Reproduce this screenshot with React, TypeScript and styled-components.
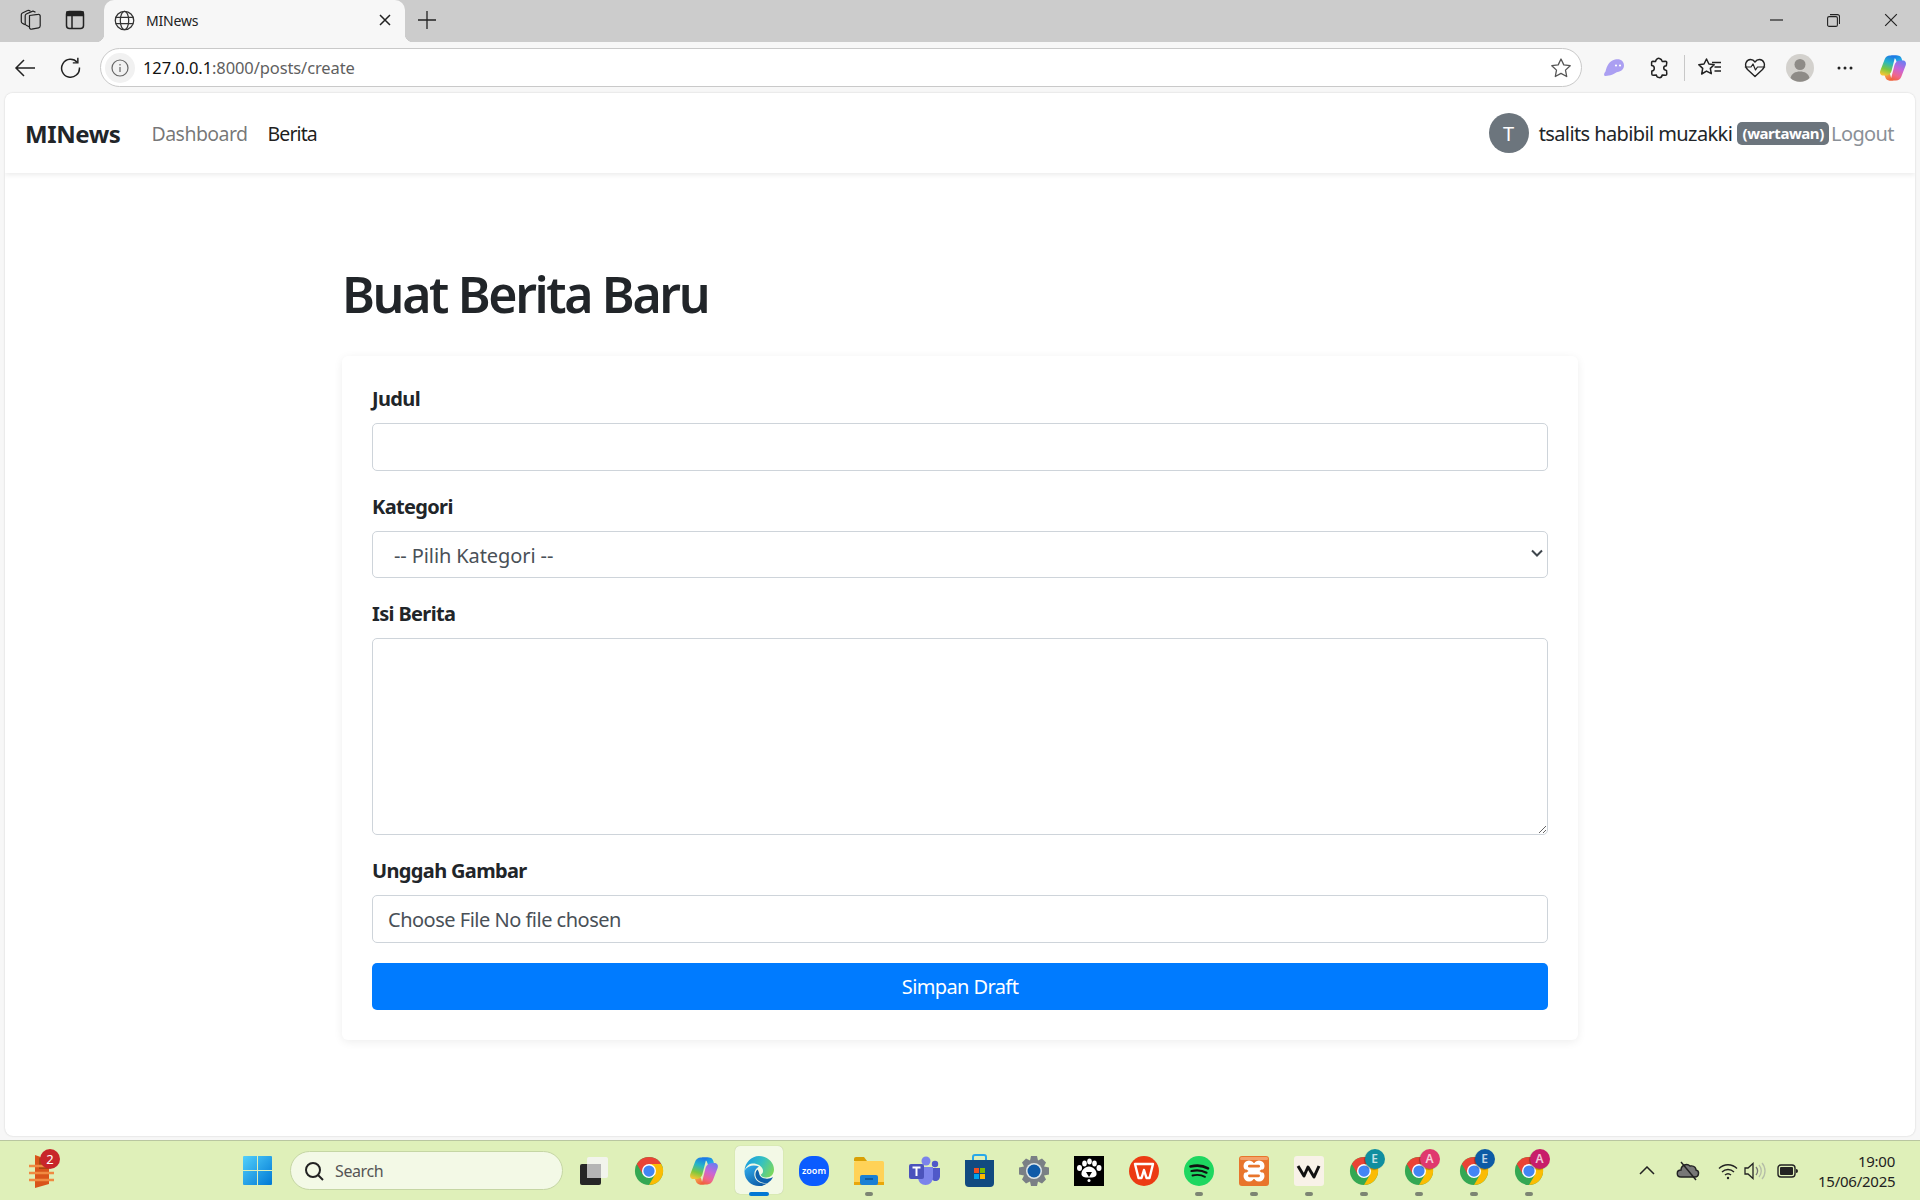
import React from "react";
import styled, { createGlobalStyle } from "styled-components";

const GlobalStyle = createGlobalStyle`
  html, body {
    margin: 0;
    padding: 0;
    height: 1200px;
    overflow: hidden;
    font-family: "Noto Sans", "Open Sans", sans-serif;
    color: #212529;
  }
  * { box-sizing: border-box; }
`;

const Screen = styled.div`
  width: 1920px;
  height: 1200px;
  display: flex;
  flex-direction: column;
  background: #f7f7f7;
`;

const TabStrip = styled.div`
  height: 42px;
  flex: none;
  display: flex;
  align-items: center;
  background: #cccccc;
  padding-left: 9px;
`;

const StripButton = styled.div`
  width: 44px;
  height: 42px;
  padding-bottom: 2px;
  display: flex;
  align-items: center;
  justify-content: center;
`;

const Tab = styled.div`
  position: relative;
  width: 301px;
  height: 42px;
  margin-left: 7px;
  display: flex;
  align-items: center;
  padding: 0 14px 2px 10px;
  background: #f7f7f7;
  border-radius: 10px 10px 0 0;
  &::before, &::after {
    content: "";
    position: absolute;
    bottom: 0;
    width: 8px;
    height: 8px;
  }
  &::before {
    left: -8px;
    background: radial-gradient(circle at 0 0, #cccccc 8px, #f7f7f7 8.5px);
  }
  &::after {
    right: -8px;
    background: radial-gradient(circle at 100% 0, #cccccc 8px, #f7f7f7 8.5px);
  }
`;

const TabTitle = styled.span`
  flex: 1;
  margin-left: 11px;
  font-size: 14px;
  letter-spacing: -0.2px;
  color: #222;
`;

const WindowControls = styled.div`
  margin-left: auto;
  display: flex;
`;

const WindowButton = styled.div`
  width: 57.5px;
  height: 42px;
  padding-bottom: 2px;
  display: flex;
  align-items: center;
  justify-content: center;
`;

const Toolbar = styled.div`
  height: 51px;
  flex: none;
  display: flex;
  align-items: center;
  padding: 0 4.5px 0 2.5px;
`;

const ToolButton = styled.div<{ $pushed?: boolean }>`
  width: 45px;
  height: 40px;
  margin-left: ${({ $pushed }) => ($pushed ? 3 : 0)}px;
  flex: none;
  display: flex;
  align-items: center;
  justify-content: center;
`;

const AddressBar = styled.div`
  flex: 1;
  height: 39px;
  margin: 0 9.5px 0 7.5px;
  padding: 0 9px 0 4px;
  display: flex;
  align-items: center;
  background: #fff;
  border: 1px solid #c9c9c9;
  border-radius: 20px;
`;

const InfoChip = styled.div`
  width: 30px;
  height: 30px;
  border-radius: 50%;
  background: #f1f1f1;
  display: flex;
  align-items: center;
  justify-content: center;
`;

const Url = styled.div`
  flex: 1;
  margin-left: 8px;
  font-size: 16.5px;
  letter-spacing: -0.1px;
  color: #5f5f5f;
  b {
    font-weight: 400;
    color: #111;
  }
`;

const ToolDivider = styled.div`
  width: 1px;
  height: 26px;
  margin: 0 2.5px;
  background: #c8c8c8;
  flex: none;
`;

const Panel = styled.div`
  flex: 1;
  margin: 0 5px 4px;
  background: #fff;
  border-radius: 8px;
  box-shadow: 0 0 2px rgba(0, 0, 0, 0.18);
  overflow: hidden;
`;

const Navbar = styled.nav`
  height: 80px;
  display: flex;
  align-items: center;
  padding: 0 21px 0 20px;
  background: #fff;
  box-shadow: 0 2px 5px rgba(0, 0, 0, 0.08);
`;

const Brand = styled.span`
  font-size: 24px;
  font-weight: 700;
  letter-spacing: -0.4px;
  color: #212529;
  margin-right: 31px;
`;

const NavLink = styled.span<{ $active?: boolean }>`
  font-size: 19.5px;
  letter-spacing: ${({ $active }) => ($active ? "-0.9px" : "-0.55px")};
  margin-right: 20px;
  color: ${({ $active }) => ($active ? "rgba(0,0,0,.9)" : "rgba(0,0,0,.55)")};
`;

const UserArea = styled.div`
  margin-left: auto;
  display: flex;
  align-items: center;
`;

const Avatar = styled.div`
  width: 40px;
  height: 40px;
  border-radius: 50%;
  background: #6c757d;
  color: #fff;
  font-size: 20px;
  display: flex;
  align-items: center;
  justify-content: center;
  margin-right: 10px;
`;

const UserName = styled.span`
  font-size: 20px;
  letter-spacing: -0.6px;
  margin-right: 5px;
`;

const RoleBadge = styled.span`
  background: #6c757d;
  color: #fff;
  font-size: 15px;
  font-weight: 700;
  letter-spacing: -0.45px;
  line-height: 23px;
  height: 23px;
  padding: 0 5.25px;
  border-radius: 5px;
`;

const Logout = styled.span`
  font-size: 20px;
  letter-spacing: -0.6px;
  color: #8a9097;
  margin-left: 2px;
`;

const Container = styled.main`
  width: 1236px;
  margin: 0 auto;
`;

const Title = styled.h1`
  margin: 0;
  padding-top: 87px;
  height: 183px;
  font-size: 50px;
  line-height: 68px;
  font-weight: 600;
  letter-spacing: -2.35px;
  color: #212529;
`;

const Card = styled.form`
  height: 684px;
  padding: 27px 30px 0;
  background: #fff;
  border-radius: 6px;
  box-shadow: 0 2px 10px rgba(0, 0, 0, 0.07);
`;

const Label = styled.label`
  display: block;
  height: 30px;
  margin-bottom: 10px;
  font-size: 20px;
  line-height: 32px;
  font-weight: 700;
  letter-spacing: -0.65px;
  color: #212529;
`;

const Field = styled.div<{ $gap: number }>`
  margin-bottom: ${({ $gap }) => $gap}px;
`;

const TextInput = styled.input`
  display: block;
  width: 100%;
  height: 48px;
  border: 1px solid #ced4da;
  border-radius: 5px;
  background: #fff;
  outline: none;
`;

const SelectWrap = styled.div`
  position: relative;
  svg {
    position: absolute;
    right: 5px;
    top: 18px;
    pointer-events: none;
  }
`;

const SelectInput = styled.select`
  display: block;
  width: 100%;
  height: 47px;
  padding: 2px 10px 0 21px;
  appearance: none;
  border: 1px solid #ced4da;
  border-radius: 5px;
  background: #fff;
  font-family: inherit;
  font-size: 20px;
  letter-spacing: -0.1px;
  color: #495057;
  outline: none;
`;

const TextArea = styled.textarea`
  display: block;
  width: 100%;
  height: 197px;
  border: 1px solid #ced4da;
  border-radius: 5px;
  resize: vertical;
  outline: none;
`;

const FileBox = styled.div`
  height: 48px;
  padding: 0 15px;
  display: flex;
  align-items: center;
  border: 1px solid #ced4da;
  border-radius: 5px;
  font-size: 20px;
  letter-spacing: -0.5px;
  color: #495057;
`;

const SubmitButton = styled.button`
  display: block;
  width: 100%;
  height: 47px;
  border: 0;
  border-radius: 5px;
  background: #007bff;
  color: #fff;
  font-family: inherit;
  font-size: 20px;
  letter-spacing: -0.6px;
`;

const Taskbar = styled.div`
  height: 60px;
  flex: none;
  display: flex;
  align-items: center;
  background: #dff0b9;
  border-top: 1px solid #b9c6a0;
`;

const WidgetSlot = styled.div`
  position: relative;
  width: 84px;
  height: 59px;
  flex: none;
  display: flex;
  align-items: center;
  justify-content: center;
`;

const WidgetBadge = styled.span`
  position: absolute;
  left: 40px;
  top: 8px;
  width: 20px;
  height: 20px;
  border-radius: 50%;
  background: #c8262a;
  color: #fff;
  font-size: 13px;
  line-height: 20px;
  text-align: center;
`;

const StartSlot = styled.div`
  width: 44px;
  margin-left: 151px;
  flex: none;
  display: flex;
  justify-content: center;
`;

const SearchBox = styled.div`
  width: 273px;
  height: 39px;
  margin-left: 11px;
  padding-left: 13px;
  flex: none;
  display: flex;
  align-items: center;
  gap: 11px;
  background: #f3f9e6;
  border: 1px solid #c5d6a4;
  border-radius: 20px;
  font-size: 16px;
  letter-spacing: -0.4px;
  color: #555;
`;

const TaskIcons = styled.div`
  margin-left: 3.5px;
  display: flex;
`;

const TaskSlot = styled.div<{ $active?: boolean }>`
  position: relative;
  width: 55px;
  height: 59px;
  display: flex;
  align-items: center;
  justify-content: center;
  &::before {
    content: "";
    display: ${({ $active }) => ($active ? "block" : "none")};
    position: absolute;
    left: 3.5px;
    top: 5px;
    width: 48px;
    height: 48px;
    border-radius: 5px;
    background: #f3f9e6;
    box-shadow: 0 0 1px rgba(0, 0, 0, 0.25);
  }
  svg { position: relative; }
`;

const RunDot = styled.span<{ $active?: boolean }>`
  position: absolute;
  bottom: 4px;
  left: 50%;
  transform: translateX(-50%);
  width: ${({ $active }) => ($active ? 20 : 8)}px;
  height: 4px;
  border-radius: 2px;
  background: ${({ $active }) => ($active ? "#0078d4" : "#7d8573")};
`;

const ProfileBadge = styled.span<{ $color: string }>`
  position: absolute;
  left: 28px;
  top: 8px;
  width: 20px;
  height: 20px;
  border-radius: 50%;
  background: ${({ $color }) => $color};
  box-shadow: -1px 1px 1px rgba(0, 0, 0, 0.3);
  color: rgba(255, 255, 255, 0.75);
  font-size: 12px;
  font-weight: 600;
  line-height: 20px;
  text-align: center;
`;

const Tray = styled.div`
  margin-left: auto;
  padding-right: 25px;
  display: flex;
  align-items: center;
`;

const TrayItem = styled.div<{ $w: number; $mr: number }>`
  width: ${({ $w }) => $w}px;
  margin-right: ${({ $mr }) => $mr}px;
  display: flex;
  justify-content: center;
`;

const Clock = styled.div`
  width: 77px;
  text-align: right;
  white-space: nowrap;
  font-size: 15px;
  line-height: 20px;
  letter-spacing: -0.25px;
  color: #222;
`;

const Workspaces = () => (
  <svg width="22" height="22" viewBox="0 0 22 22" fill="none" stroke="#222" strokeWidth="1.2" strokeLinejoin="round">
    <path d="M9.500 6.500 18 5.300a1.800 1.800 0 0 1 2.200 1.800v9.700a2 2 0 0 1-1.600 2l-7 1.400a1.800 1.800 0 0 1-2.100-1.800z" />
    <path d="M15.500 3.200 13.800 2.400a1.800 1.800 0 0 0-1.700 0L6.300 5a2 2 0 0 0-1.100 1.800v7.800a1.800 1.800 0 0 0 1 1.600l3 1.500" />
    <path d="M10.500 2.200 9.300 1.500a1.800 1.800 0 0 0-1.700 0L2.400 4A2 2 0 0 0 1.300 5.800v6.800a1.800 1.800 0 0 0 1 1.600l2.600 1.400" />
  </svg>
);

const VerticalTabs = () => (
  <svg width="20" height="20" viewBox="0 0 20 20" fill="none" stroke="#222" strokeWidth="1.500">
    <rect x="1.500" y="1.500" width="17" height="17" rx="3" />
    <path d="M2 2h16v3.500H2z" fill="#222" />
    <path d="M7 5v13" />
  </svg>
);

const Globe = () => (
  <svg width="21" height="21" viewBox="0 0 20 20" fill="none" stroke="#333" strokeWidth="1.2">
    <circle cx="10" cy="10" r="8.800" />
    <ellipse cx="10" cy="10" rx="4" ry="8.800" />
    <path d="M1.600 7h16.800M1.600 13h16.800" />
  </svg>
);

const CloseX = ({ size = 12, w = 1.5 }: { size?: number; w?: number }) => (
  <svg width={size} height={size} viewBox="0 0 12 12" stroke="#222" strokeWidth={w}>
    <path d="M1 1l10 10M11 1 1 11" />
  </svg>
);

const Plus = () => (
  <svg width="18" height="18" viewBox="0 0 18 18" stroke="#222" strokeWidth="1.300">
    <path d="M9 0v18M0 9h18" />
  </svg>
);

const Minimize = () => (
  <svg width="13" height="2" viewBox="0 0 13 2" stroke="#222" strokeWidth="1.200">
    <path d="M0 1h13" />
  </svg>
);

const Restore = () => (
  <svg width="13" height="13" viewBox="0 0 13 13" fill="none" stroke="#222" strokeWidth="1.100">
    <rect x="0.600" y="2.600" width="9.800" height="9.800" rx="1.500" />
    <path d="M3 .6h7.500a2 2 0 0 1 2 2V10" />
  </svg>
);

const BackArrow = () => (
  <svg width="22" height="20" viewBox="0 0 22 20" fill="none" stroke="#222" strokeWidth="1.500">
    <path d="M21 10H2M10 2l-8 8 8 8" />
  </svg>
);

const Reload = () => (
  <svg width="21" height="21" viewBox="0 0 20 20" fill="none" stroke="#222" strokeWidth="1.400">
    <path d="M16.500 5.200A8.500 8.500 0 1 0 18.500 10" />
    <path d="M17 .8v4.800h-4.800" />
  </svg>
);

const InfoIcon = () => (
  <svg width="18" height="18" viewBox="0 0 18 18" fill="none" stroke="#666" strokeWidth="1.200">
    <circle cx="9" cy="9" r="8" />
    <path d="M9 8v5M9 5v1.400" />
  </svg>
);

const StarIcon = () => (
  <svg width="22" height="22" viewBox="0 0 22 22" fill="none" stroke="#555" strokeWidth="1.300" strokeLinejoin="round">
    <path d="M11 2l2.800 5.900 6.400.8-4.700 4.400 1.200 6.400L11 16.400l-5.700 3.100 1.200-6.400-4.700-4.400 6.400-.8z" />
  </svg>
);

const GhostIcon = () => (
  <svg width="22" height="19" viewBox="0 0 22 19">
    <path d="M2.500 18C.5 18 .8 15.500 2.500 13.500 3.800 8 6 3 12 1.500 17.500.3 21 3 21 7.500 21 11 18 13.500 14.500 14 12.500 14.300 11.500 16 9 16.800 7 17.500 5 18 2.500 18z" fill="#ab9ff2" />
    <circle cx="13" cy="7.500" r="1.100" fill="#fff" />
    <circle cx="17" cy="7.500" r="1.100" fill="#fff" />
  </svg>
);

const PuzzleIcon = () => (
  <svg width="22" height="22" viewBox="0 0 22 22" fill="none" stroke="#222" strokeWidth="1.500" strokeLinejoin="round">
    <path d="M7.500 4.500C8 2 10 1 11.500 1.500c1.700.5 2.500 1.600 2.700 3l3.300-.3c.8 0 1.300.5 1.300 1.300l-.5 3.300c-1.800 0-2.600 1-2.600 2.300s.9 2.200 2.800 2.300l.3 3.600c0 .8-.5 1.300-1.300 1.300l-3.300-.3c-.3 1.500-1.500 2.800-3 2.600-1.500 0-2.600-1.200-2.800-2.600l-3.300.3c-.8 0-1.300-.5-1.300-1.300V14c1.500-.2 2.500-1.300 2.500-2.800S5.600 8.700 3.600 8.500V5.500c0-.8.5-1.300 1.300-1.300z" />
  </svg>
);

const FavoritesIcon = () => (
  <svg width="26" height="22" viewBox="0 0 26 22" fill="none" stroke="#222" strokeWidth="1.500" strokeLinejoin="round">
    <path d="M9.500 2l2.400 5 5.300.7-3.900 3.700 1 5.300-4.800-2.600-4.800 2.900 1-5.600L1.800 7.700 7 7z" />
    <path d="M15 5.500h9M17.500 10h6.500M17.500 14h6.500" />
  </svg>
);

const HeartIcon = () => (
  <svg width="22" height="20" viewBox="0 0 22 20" fill="none" stroke="#222" strokeWidth="1.400" strokeLinejoin="round">
    <path d="M11 18.500 3.500 11.500C-.5 7 2.500 1.500 6.500 1.500c2 0 3.500 1 4.500 2.500 1-1.500 2.500-2.500 4.500-2.500 4 0 7 5.500 3 10z" />
    <path d="M.8 9H7l2-3 2.500 6 2-3h7.700" strokeWidth="1.200" />
  </svg>
);

const ProfileIcon = () => (
  <svg width="28" height="28" viewBox="0 0 28 28">
    <circle cx="14" cy="14" r="14" fill="#d3d1cd" />
    <circle cx="14" cy="10.500" r="5.500" fill="#8e8b87" />
    <path d="M4.500 24c1-4.500 5-6.500 9.500-6.500s8.500 2 9.500 6.500a14 14 0 0 1-19 0z" fill="#8e8b87" />
  </svg>
);

const DotsIcon = () => (
  <svg width="16" height="4" viewBox="0 0 16 4" fill="#222">
    <circle cx="2" cy="2" r="1.500" />
    <circle cx="8" cy="2" r="1.500" />
    <circle cx="14" cy="2" r="1.500" />
  </svg>
);

const CopilotIcon = ({ id, size = 28 }: { id: string; size?: number }) => (
  <svg width={size} height={size} viewBox="0 0 28 28">
    <defs>
      <linearGradient id={`${id}a`} x1="0.6" y1="0" x2="0.3" y2="1">
        <stop offset="0" stopColor="#1d78e8" />
        <stop offset="0.35" stopColor="#25b5c8" />
        <stop offset="0.7" stopColor="#7cc83e" />
        <stop offset="1" stopColor="#f4c534" />
      </linearGradient>
      <linearGradient id={`${id}b`} x1="0.7" y1="0" x2="0.3" y2="1">
        <stop offset="0" stopColor="#6f7cf0" />
        <stop offset="0.4" stopColor="#c765d8" />
        <stop offset="0.75" stopColor="#f0668a" />
        <stop offset="1" stopColor="#f0613a" />
      </linearGradient>
      <linearGradient id={`${id}c`} x1="0" y1="0" x2="1" y2="1">
        <stop offset="0" stopColor="#0f6fe0" />
        <stop offset="1" stopColor="#2fc2e8" />
      </linearGradient>
      <linearGradient id={`${id}d`} x1="0" y1="0" x2="1" y2="1">
        <stop offset="0" stopColor="#f7b34a" />
        <stop offset="1" stopColor="#ee4f3a" />
      </linearGradient>
    </defs>
    <path d="M12 1.500h6.500c2 0 3.500 1 4.200 3.200L24 9h-6l-1-3c-.5-1.500-1.500-2.200-3-2.200z" fill={`url(#${id}c)`} />
    <path d="M5 20h6l1 3.500c.5 1.500 1.500 3 3 3h-4.500c-2 0-3.500-1-4.200-3.200z" fill={`url(#${id}d)`} />
    <path d="M11 1.500h8c-2 0-2.800 1.200-3.400 3.200L12.500 17c-.7 2.500-2.700 4.500-6 4.500H4.200C1.800 21.500.5 19.500 1.200 17L5.600 5.500C6.500 3 8.500 1.500 11 1.500z" fill={`url(#${id}a)`} />
    <path d="M17 26.500h-8c2 0 2.800-1.200 3.400-3.200L15.500 11c.7-2.500 2.700-4.500 6-4.500h2.300c2.400 0 3.700 2 3 4.500L22.400 22.500c-.9 2.500-2.900 4-5.400 4z" fill={`url(#${id}b)`} />
  </svg>
);

const WidgetIcon = () => (
  <svg width="26" height="36" viewBox="0 0 26 36">
    <path d="M6 2 20 7v24L6 35z" fill="#d9541a" />
    <path d="M10 5l10 3v8H10z" fill="#a8480f" />
    <path d="M0 13h25M0 20h25M0 27h25" stroke="#f08a42" strokeWidth="2.400" fill="none" />
  </svg>
);

const StartIcon = () => (
  <svg width="29" height="29" viewBox="0 0 29 29">
    <defs>
      <linearGradient id="startA" x1="0" y1="0" x2="1" y2="1">
        <stop offset="0" stopColor="#52d0fb" />
        <stop offset="1" stopColor="#0078d4" />
      </linearGradient>
    </defs>
    <path d="M0 1a1 1 0 0 1 1-1h13v14H0zM15 0h13a1 1 0 0 1 1 1v13H15zM0 15h14v14H1a1 1 0 0 1-1-1zM15 15h14v13a1 1 0 0 1-1 1H15z" fill="url(#startA)" />
  </svg>
);

const SearchIcon = () => (
  <svg width="20" height="20" viewBox="0 0 20 20" fill="none" stroke="#222" strokeWidth="2">
    <circle cx="9" cy="9" r="7" />
    <path d="M14 14l5 5" />
  </svg>
);

const TaskView = () => (
  <svg width="30" height="30" viewBox="0 0 30 30">
    <rect x="1" y="8" width="21" height="21" rx="2" fill="#262626" />
    <rect x="8" y="1" width="21" height="21" rx="2" fill="#f4f4f4" opacity="0.86" />
    <rect x="8" y="8" width="14" height="14" fill="#b5b5b5" />
  </svg>
);

const ChromeIcon = () => (
  <svg width="30" height="30" viewBox="0 0 32 32">
    <circle cx="16" cy="16" r="15" fill="#34a853" />
    <path d="M29 8.500H16l6.500 11.250L16 31A15 15 0 0 0 29 8.500z" fill="#fbbc04" />
    <path d="M16 1A15 15 0 0 1 29 8.500H16L9.500 19.750 3 8.500A15 15 0 0 1 16 1z" fill="#ea4335" />
    <circle cx="16" cy="16" r="7.500" fill="#fff" />
    <circle cx="16" cy="16" r="6" fill="#4285f4" />
  </svg>
);

const EdgeIcon = () => (
  <svg width="32" height="32" viewBox="0 0 32 32">
    <defs>
      <linearGradient id="edgeA" x1="0.2" y1="0" x2="0.8" y2="1">
        <stop offset="0" stopColor="#2fa8e8" />
        <stop offset="1" stopColor="#0c59a4" />
      </linearGradient>
      <linearGradient id="edgeB" x1="0" y1="0.3" x2="1" y2="0.7">
        <stop offset="0" stopColor="#1b9de2" />
        <stop offset="0.5" stopColor="#35c1c1" />
        <stop offset="1" stopColor="#7cd85a" />
      </linearGradient>
    </defs>
    <path d="M1.500 15.500C1 24.500 8 31 16 31c3.500 0 6-1 8.500-2.800C18.500 29.500 12.500 26.500 11.500 21c-.8-4 1-7.500 4.500-9.500C10.500 9.500 5 10.500 1.500 15.500z" fill="url(#edgeA)" />
    <path d="M1.500 15.500C2 7.500 8.500 1 16 1c8.500 0 15 6.500 15 13.500 0 5-3.500 8-7.500 8-3 0-5.300-1-5.800-2.800 2-1.200 2.800-3.200 2-5.500C18.500 10.500 13.500 8 9 8.500 6 8.800 3.300 11 1.500 15.500z" fill="url(#edgeB)" />
    <path d="M14.500 14.500c-2 2-2.700 5-1.500 8 1.500 3.500 6 6 11.500 5.700 2.500-1.700 4.500-3.700 5.500-6.200-2.500 1.600-5 2-7.500 1.500-3.500-.5-5.500-2-6-3.800-.5-1.800-.8-3.500-2-5.200z" fill="#0f62ad" />
  </svg>
);

const ZoomIcon = () => (
  <svg width="30" height="30" viewBox="0 0 30 30">
    <rect width="30" height="30" rx="13" fill="#0b5cff" />
    <text x="15" y="18" textAnchor="middle" fontSize="9" fontWeight="600" fill="#fff" fontFamily="Noto Sans, sans-serif">zoom</text>
  </svg>
);

const FolderIcon = () => (
  <svg width="30" height="28" viewBox="0 0 30 28">
    <path d="M0 2a2 2 0 0 1 2-2h8l3 4h-13z" fill="#d9a005" />
    <rect y="4" width="30" height="24" rx="1.500" fill="#ffd257" />
    <rect y="25" width="30" height="3" fill="#e9a70b" />
    <rect x="6" y="18" width="18" height="10" rx="2" fill="#1a7fd4" />
    <path d="M11 22h8" stroke="#0c4f90" strokeWidth="1.500" />
  </svg>
);

const TeamsIcon = () => (
  <svg width="31" height="30" viewBox="0 0 31 30">
    <circle cx="17" cy="5" r="4.500" fill="#7b83eb" />
    <circle cx="26" cy="8" r="3.200" fill="#5059c9" />
    <path d="M22 12h9v8c0 3-2 5-4.500 5S22 23 22 20z" fill="#5059c9" />
    <path d="M9 11h15v10c0 5-3.500 8-7.500 8S9 26 9 21z" fill="#7b83eb" />
    <rect y="8" width="15" height="15" rx="2" fill="#4b53bc" />
    <path d="M3.500 11.500h8M7.500 11.500v8.500" stroke="#fff" strokeWidth="2" />
  </svg>
);

const StoreIcon = () => (
  <svg width="29" height="33" viewBox="0 0 29 33">
    <path d="M8 8V3a2 2 0 0 1 2-2h9a2 2 0 0 1 2 2v5" fill="none" stroke="#28a8ea" strokeWidth="2" />
    <path d="M0 6h29v23a4 4 0 0 1-4 4H4a4 4 0 0 1-4-4z" fill="#114a80" />
    <rect x="9" y="14" width="5" height="5" fill="#f25022" />
    <rect x="15" y="14" width="5" height="5" fill="#7fba00" />
    <rect x="9" y="20" width="5" height="5" fill="#00a4ef" />
    <rect x="15" y="20" width="5" height="5" fill="#ffb900" />
  </svg>
);

const SettingsIcon = () => (
  <svg width="30" height="30" viewBox="0 0 30 30">
    <path d="M12 0h6l1 4.500 4-2 4 4-2 4 5 1v7l-5 1 2 4-4 4-4-2-1 4.500h-6l-1-4.500-4 2-4-4 2-4-5-1v-7l5-1-2-4 4-4 4 2z" fill="#7a7f85" />
    <circle cx="15" cy="15" r="8" fill="#dfe6e8" />
    <circle cx="15" cy="15" r="6.500" fill="#0f5aa8" />
  </svg>
);

const PawIcon = () => (
  <svg width="30" height="30" viewBox="0 0 30 30">
    <rect width="30" height="30" fill="#000" />
    <g fill="#fff">
      <ellipse cx="10.500" cy="7.500" rx="2.300" ry="3" />
      <ellipse cx="15.500" cy="5.500" rx="2.300" ry="3" />
      <ellipse cx="20.500" cy="7.500" rx="2.300" ry="3" />
      <ellipse cx="5.500" cy="12" rx="2.500" ry="3" />
      <ellipse cx="25" cy="12" rx="2.500" ry="3" />
      <path d="M15 10.500c4 0 8 4 7.500 8-.4 2.500-3 3-7.500 3s-7-.5-7.500-3c-.5-4 3.500-8 7.500-8z" />
    </g>
    <path d="M12 16h6l-3 5z" fill="#000" />
    <circle cx="15" cy="24.500" r="1.500" fill="#fff" />
  </svg>
);

const WpsIcon = () => (
  <svg width="30" height="30" viewBox="0 0 30 30">
    <circle cx="15" cy="15" r="15" fill="#ec3b13" />
    <path d="M6 8h18l-3.500 14h-3L15 14l-2.500 8h-3z" fill="none" stroke="#fff" strokeWidth="2.400" strokeLinejoin="round" />
  </svg>
);

const SpotifyIcon = () => (
  <svg width="30" height="30" viewBox="0 0 30 30" fill="none">
    <circle cx="15" cy="15" r="15" fill="#1ed760" />
    <path d="M6.500 10.500c6-1.500 12.500-1 17.500 1.800" stroke="#111" strokeWidth="2.600" strokeLinecap="round" />
    <path d="M7.500 15c5-1.200 10.500-.8 15 1.700" stroke="#111" strokeWidth="2.200" strokeLinecap="round" />
    <path d="M8.500 19.500c4.500-1 9-.6 12.500 1.400" stroke="#111" strokeWidth="1.800" strokeLinecap="round" />
  </svg>
);

const XamppIcon = () => (
  <svg width="30" height="30" viewBox="0 0 30 30">
    <rect width="30" height="30" rx="3" fill="#e8752c" />
    <rect x="1" y="1" width="28" height="3" rx="1.500" fill="#f3a26a" />
    <g fill="#fff">
      <circle cx="10" cy="10" r="5.500" />
      <circle cx="20" cy="10" r="5.500" />
      <circle cx="10" cy="20" r="5.500" />
      <circle cx="20" cy="20" r="5.500" />
      <rect x="10" y="7" width="10" height="16" />
    </g>
    <g fill="#e8752c">
      <rect x="9" y="8.800" width="12" height="2.800" rx="1.400" />
      <rect x="9" y="18.400" width="12" height="2.800" rx="1.400" />
      <path d="M4 13.500h3.500l2 1.500-2 1.500H4zM26 13.500h-3.500l-2 1.500 2 1.500H26z" />
    </g>
  </svg>
);

const WaveIcon = () => (
  <svg width="30" height="30" viewBox="0 0 30 30" fill="none">
    <rect width="30" height="30" rx="3" fill="#f8f2e8" />
    <path d="M4 10l6 10 4-9 6 10 5-11" stroke="#111" strokeWidth="3" strokeLinejoin="round" />
  </svg>
);

const SelectChevron = () => (
  <svg width="12" height="9" viewBox="0 0 12 9" fill="none" stroke="#3f464d" strokeWidth="2">
    <path d="M1 1.500l5 5 5-5" />
  </svg>
);

const Chevron = () => (
  <svg width="16" height="9" viewBox="0 0 16 9" fill="none" stroke="#222" strokeWidth="1.500">
    <path d="M1 8l7-7 7 7" />
  </svg>
);

const CloudOff = () => (
  <svg width="24" height="20" viewBox="0 0 24 20" stroke="#222" strokeWidth="1.400">
    <path d="M6 16H5c-5 0-5-7 0-7 0-5 6-7 9-4 5-1 6 3 6 4 4 1 3 7-1 7z" fill="#777" />
    <path d="M5 1l15 18" />
  </svg>
);

const WifiIcon = () => (
  <svg width="20" height="18" viewBox="0 0 20 18" fill="none" stroke="#222" strokeWidth="1.400">
    <path d="M1 6.500c5-5 13-5 18 0M4 10c3.500-3.300 8.500-3.300 12 0M7 13c1.700-1.500 4.300-1.500 6 0" />
    <circle cx="10" cy="16" r="1.200" fill="#222" stroke="none" />
  </svg>
);

const VolumeIcon = () => (
  <svg width="22" height="20" viewBox="0 0 22 20" fill="none" stroke="#222" strokeWidth="1.300">
    <path d="M1 7h3l5-4.500v15L4 13H1z" />
    <path d="M12 6c2 2.500 2 5.500 0 8" stroke="#777" />
    <path d="M15 4c3 3.500 3 8.500 0 12M18 2c4 4.500 4 11.500 0 16" stroke="#b5bda8" />
  </svg>
);

const BatteryIcon = () => (
  <svg width="21" height="14" viewBox="0 0 21 14" fill="none">
    <rect x="1" y="1" width="17" height="12" rx="3" stroke="#222" strokeWidth="1.400" />
    <rect x="3" y="3" width="13" height="8" rx="1" fill="#222" />
    <path d="M19 5v4a2 2 0 0 0 2-2 2 2 0 0 0-2-2z" fill="#222" />
  </svg>
);

const profiles = [
  { letter: "E", color: "#0f8ea0" },
  { letter: "A", color: "#e0386e" },
  { letter: "E", color: "#0d5ba6" },
  { letter: "A", color: "#c81d6a" },
];

const App = () => (
  <>
    <GlobalStyle />
    <Screen>
      <TabStrip>
        <StripButton><Workspaces /></StripButton>
        <StripButton><VerticalTabs /></StripButton>
        <Tab>
          <Globe />
          <TabTitle>MINews</TabTitle>
          <CloseX />
        </Tab>
        <StripButton><Plus /></StripButton>
        <WindowControls>
          <WindowButton><Minimize /></WindowButton>
          <WindowButton><Restore /></WindowButton>
          <WindowButton><CloseX size={14} w={1} /></WindowButton>
        </WindowControls>
      </TabStrip>

      <Toolbar>
        <ToolButton><BackArrow /></ToolButton>
        <ToolButton><Reload /></ToolButton>
        <AddressBar>
          <InfoChip><InfoIcon /></InfoChip>
          <Url><b>127.0.0.1</b>:8000/posts/create</Url>
          <StarIcon />
        </AddressBar>
        <ToolButton><GhostIcon /></ToolButton>
        <ToolButton><PuzzleIcon /></ToolButton>
        <ToolDivider />
        <ToolButton><FavoritesIcon /></ToolButton>
        <ToolButton><HeartIcon /></ToolButton>
        <ToolButton><ProfileIcon /></ToolButton>
        <ToolButton><DotsIcon /></ToolButton>
        <ToolButton $pushed><CopilotIcon id="copilotTop" /></ToolButton>
      </Toolbar>

      <Panel>
        <Navbar>
          <Brand>MINews</Brand>
          <NavLink>Dashboard</NavLink>
          <NavLink $active>Berita</NavLink>
          <UserArea>
            <Avatar>T</Avatar>
            <UserName>tsalits habibil muzakki</UserName>
            <RoleBadge>(wartawan)</RoleBadge>
            <Logout>Logout</Logout>
          </UserArea>
        </Navbar>
        <Container>
          <Title>Buat Berita Baru</Title>
          <Card onSubmit={(e) => e.preventDefault()}>
            <Field $gap={20}>
              <Label htmlFor="judul">Judul</Label>
              <TextInput id="judul" type="text" />
            </Field>
            <Field $gap={20}>
              <Label htmlFor="kategori">Kategori</Label>
              <SelectWrap>
                <SelectInput id="kategori" defaultValue="">
                  <option value="">-- Pilih Kategori --</option>
                </SelectInput>
                <SelectChevron />
              </SelectWrap>
            </Field>
            <Field $gap={20}>
              <Label htmlFor="isi">Isi Berita</Label>
              <TextArea id="isi" />
            </Field>
            <Field $gap={20}>
              <Label>Unggah Gambar</Label>
              <FileBox>Choose File No file chosen</FileBox>
            </Field>
            <SubmitButton type="submit">Simpan Draft</SubmitButton>
          </Card>
        </Container>
      </Panel>

      <Taskbar>
        <WidgetSlot>
          <WidgetIcon />
          <WidgetBadge>2</WidgetBadge>
        </WidgetSlot>
        <StartSlot><StartIcon /></StartSlot>
        <SearchBox>
          <SearchIcon />
          Search
        </SearchBox>
        <TaskIcons>
          <TaskSlot><TaskView /></TaskSlot>
          <TaskSlot><ChromeIcon /></TaskSlot>
          <TaskSlot><CopilotIcon id="copilotBar" size={30} /></TaskSlot>
          <TaskSlot $active><EdgeIcon /><RunDot $active /></TaskSlot>
          <TaskSlot><ZoomIcon /></TaskSlot>
          <TaskSlot><FolderIcon /><RunDot /></TaskSlot>
          <TaskSlot><TeamsIcon /></TaskSlot>
          <TaskSlot><StoreIcon /></TaskSlot>
          <TaskSlot><SettingsIcon /></TaskSlot>
          <TaskSlot><PawIcon /></TaskSlot>
          <TaskSlot><WpsIcon /></TaskSlot>
          <TaskSlot><SpotifyIcon /><RunDot /></TaskSlot>
          <TaskSlot><XamppIcon /><RunDot /></TaskSlot>
          <TaskSlot><WaveIcon /><RunDot /></TaskSlot>
          {profiles.map((p, i) => (
            <TaskSlot key={i}>
              <ChromeIcon />
              <ProfileBadge $color={p.color}>{p.letter}</ProfileBadge>
              <RunDot />
            </TaskSlot>
          ))}
        </TaskIcons>
        <Tray>
          <TrayItem $w={16} $mr={20}><Chevron /></TrayItem>
          <TrayItem $w={26} $mr={15}><CloudOff /></TrayItem>
          <TrayItem $w={24} $mr={4}><WifiIcon /></TrayItem>
          <TrayItem $w={22} $mr={8}><VolumeIcon /></TrayItem>
          <TrayItem $w={26} $mr={18}><BatteryIcon /></TrayItem>
          <Clock>19:00<br />15/06/2025</Clock>
        </Tray>
      </Taskbar>
    </Screen>
  </>
);

export default App;
